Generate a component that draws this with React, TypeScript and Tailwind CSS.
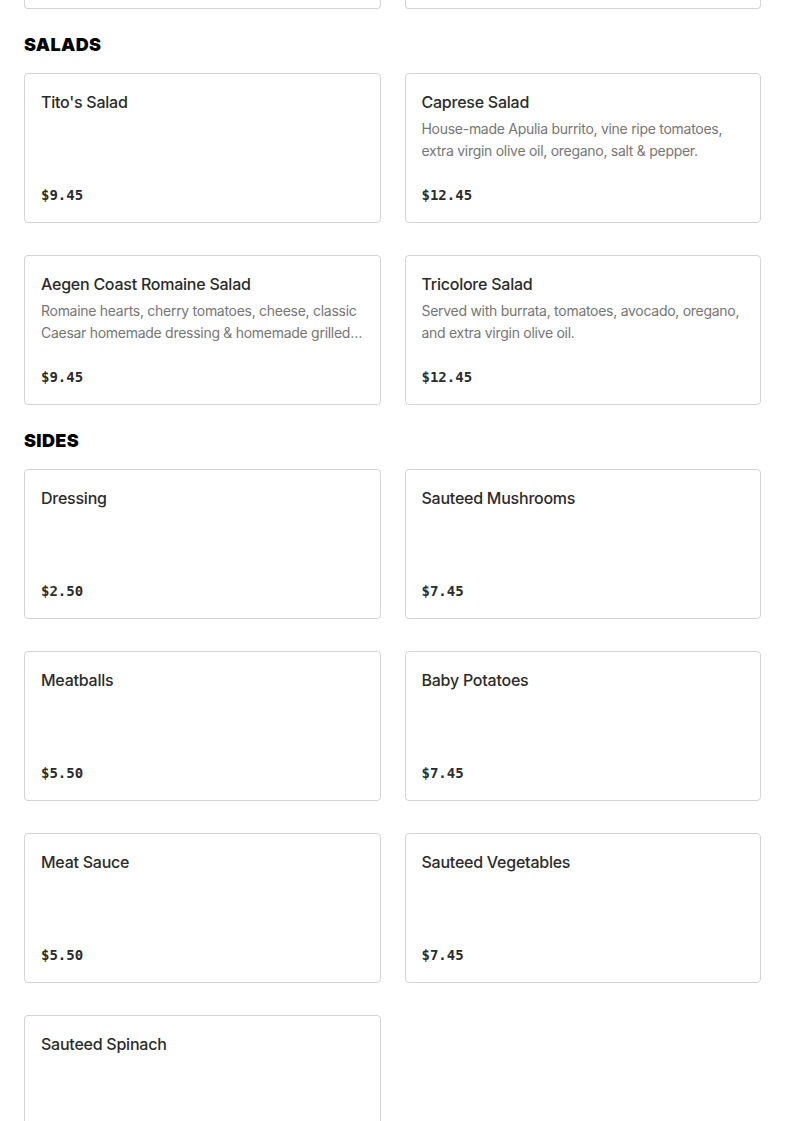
type Item = { name: string; price: string; desc?: string };

const salads: Item[] = [
  { name: "Tito's Salad", price: "$9.45" },
  {
    name: "Caprese Salad",
    price: "$12.45",
    desc: "House-made Apulia burrito, vine ripe tomatoes, extra virgin olive oil, oregano, salt & pepper.",
  },
  {
    name: "Aegen Coast Romaine Salad",
    price: "$9.45",
    desc: "Romaine hearts, cherry tomatoes, cheese, classic Caesar homemade dressing & homemade grilled chicken breast.",
  },
  {
    name: "Tricolore Salad",
    price: "$12.45",
    desc: "Served with burrata, tomatoes, avocado, oregano, and extra virgin olive oil.",
  },
];

const sides: Item[] = [
  { name: "Dressing", price: "$2.50" },
  { name: "Sauteed Mushrooms", price: "$7.45" },
  { name: "Meatballs", price: "$5.50" },
  { name: "Baby Potatoes", price: "$7.45" },
  { name: "Meat Sauce", price: "$5.50" },
  { name: "Sauteed Vegetables", price: "$7.45" },
  { name: "Sauteed Spinach", price: "$7.45" },
];

function MenuCard({ item }: { item: Item }) {
  return (
    <div className="flex h-[150px] flex-col rounded-[4px] border border-[#d4d4d4] bg-white px-4 pt-4 pb-[17px]">
      <h3 className="text-[16px] leading-6 font-medium tracking-[-0.015em] text-[#2b2b2b]">{item.name}</h3>
      {item.desc && (
        <p className="mt-1 line-clamp-2 text-[14px] leading-[22px] tracking-[-0.02em] text-[#767676]">
          {item.desc}
        </p>
      )}
      <p className="mt-auto font-['DejaVu_Sans_Mono',monospace] text-[14px] leading-5 font-semibold text-[#2b2b2b]">
        {item.price}
      </p>
    </div>
  );
}

function Section({ title, items }: { title: string; items: Item[] }) {
  return (
    <section className="mt-6">
      <h2 className="mb-4 text-[18px] leading-6 font-black tracking-[0.02em] text-black uppercase">
        {title}
      </h2>
      <div className="grid grid-cols-2 gap-x-6 gap-y-8">
        {items.map((item) => (
          <MenuCard key={item.name} item={item} />
        ))}
      </div>
    </section>
  );
}

export default function App() {
  return (
    <div className="min-h-screen overflow-hidden bg-white font-['Inter',sans-serif]">
      <div className="px-6 pb-10">
        {/* bottom edge of the previous section's last row, scrolled out of view */}
        <div className="grid grid-cols-2 gap-x-6">
          <div className="h-[9px] rounded-b-[4px] border border-t-0 border-[#d4d4d4]" />
          <div className="h-[9px] rounded-b-[4px] border border-t-0 border-[#d4d4d4]" />
        </div>
        <Section title="Salads" items={salads} />
        <Section title="Sides" items={sides} />
      </div>
    </div>
  );
}
